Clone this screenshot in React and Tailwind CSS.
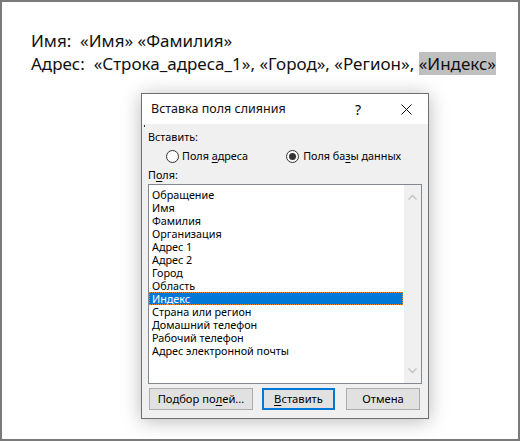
import React from 'react'

const items = [
  'Обращение',
  'Имя',
  'Фамилия',
  'Организация',
  'Адрес 1',
  'Адрес 2',
  'Город',
  'Область',
  'Индекс',
  'Страна или регион',
  'Домашний телефон',
  'Рабочий телефон',
  'Адрес электронной почты',
]

const ui = { fontFamily: '"Noto Sans", "Open Sans", sans-serif' }

const Radio = ({ checked }) => (
  <span className="w-[13px] h-[13px] rounded-full border border-[#333] bg-white flex items-center justify-center">
    {checked && <span className="w-[7px] h-[7px] rounded-full bg-[#333]" />}
  </span>
)

const Chevron = ({ down }) => (
  <svg width="9" height="6" viewBox="0 0 9 6" className="block">
    <path
      d={down ? 'M0.5 0.5 L4.5 4.5 L8.5 0.5' : 'M0.5 5.5 L4.5 1.5 L8.5 5.5'}
      fill="none"
      stroke="#c2c2c2"
      strokeWidth="1.4"
    />
  </svg>
)

export default function App() {
  return (
    <div className="w-[520px] h-[441px] border-2 border-[#7a7a7a] bg-white overflow-hidden">
      <div
        className="pl-[29px] pt-[27px] text-[17px] leading-[23px] text-[#111]"
        style={{ fontFamily: '"Noto Sans", sans-serif' }}
      >
        <div>Имя:&nbsp; «Имя» «Фамилия»</div>
        <div>
          Адрес:&nbsp; «Строка_адреса_1», «Город», «Регион»,{' '}
          <span className="bg-[#bfbfbf]">«Индекс»</span>
        </div>
      </div>

      <div
        className="ml-[139px] mt-[18px] w-[288px] h-[326px] border border-[#6f6f6f] bg-[#f0f0f0] shadow-[0_2px_18px_rgba(0,0,0,0.28)] flex flex-col text-[10.8px] text-black"
        style={ui}
      >
        <div className="h-[30px] bg-white flex items-center pl-[9px] pr-[16px] relative">
          <span className="text-[12.5px] text-[#111] flex-1">Вставка поля слияния</span>
          <span className="text-[14px] mr-[40px]">?</span>
          <svg width="11" height="11" viewBox="0 0 11 11">
            <path d="M0.5 0.5 L10.5 10.5 M10.5 0.5 L0.5 10.5" stroke="#111" strokeWidth="1" />
          </svg>
          <span className="absolute left-[2px] bottom-[-3px] w-[1px] h-[2px] bg-[#333]" />
        </div>

        <div className="flex flex-col px-[6px]">
          <div className="mt-[5px] leading-[16px]">Вставить:</div>
          <div className="flex items-center h-[18px] mt-[2px]">
            <span className="ml-[18px]">
              <Radio />
            </span>
            <span className="ml-[3px]">
              Поля <u className="underline-offset-2">а</u>дреса
            </span>
            <span className="ml-[38px]">
              <Radio checked />
            </span>
            <span className="ml-[4px]">
              Поля ба<u className="underline-offset-2">з</u>ы данных
            </span>
          </div>
          <div className="leading-[16px] mt-[2px]">
            П<u className="underline-offset-2">о</u>ля:
          </div>

          <div className="mt-[1px] h-[200px] border border-[#828790] bg-white flex">
            <div className="flex-1 pt-[3px]">
              {items.map((it) =>
                it === 'Индекс' ? (
                  <div
                    key={it}
                    className="h-[13px] leading-[13px] pl-[3px] mr-[1px] bg-[#0078d7] text-white outline outline-1 outline-dotted outline-[#e8892b] -outline-offset-1"
                  >
                    {it}
                  </div>
                ) : (
                  <div key={it} className="h-[13px] leading-[13px] pl-[3px]">
                    {it}
                  </div>
                )
              )}
            </div>
            <div className="w-[17px] bg-[#f0f0f0] flex flex-col items-center justify-between py-[9px]">
              <Chevron />
              <Chevron down />
            </div>
          </div>

          <div className="flex mt-[4px] h-[22px] text-[11.2px]">
            <div className="ml-[1px] w-[104px] border border-[#adadad] bg-[#e1e1e1] flex items-center justify-center">
              Подбор по<u className="underline-offset-2">л</u>ей...
            </div>
            <div className="ml-[9px] w-[73px] border-2 border-[#0078d7] bg-[#e1e1e1] flex items-center justify-center">
              <u className="underline-offset-2">В</u>ставить
            </div>
            <div className="ml-[11px] w-[74px] border border-[#adadad] bg-[#e1e1e1] flex items-center justify-center">
              Отмена
            </div>
          </div>
        </div>
      </div>
    </div>
  )
}
